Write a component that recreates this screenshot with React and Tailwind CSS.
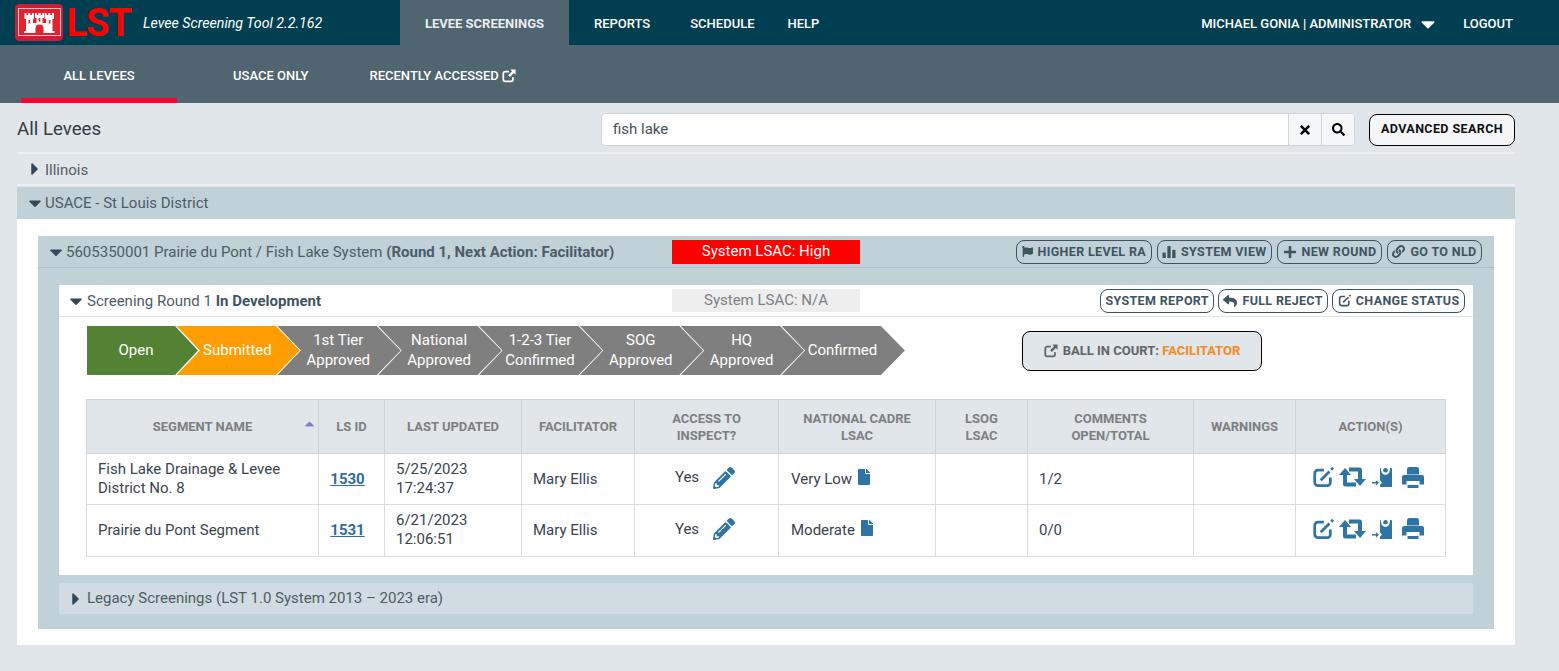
import React from "react";
import { FaCaretDown, FaCaretRight, FaFile, FaFlag, FaLink, FaPencilAlt, FaPlus, FaReply, FaSearch, FaTimes, FaSortUp } from "react-icons/fa";

function Castle() {
  return (
    <svg viewBox="0 0 48 37" className="w-[48px] h-[37px] shrink-0">
      <rect x="0" y="0" width="48" height="37" rx="4.5" fill="#c9203a" />
      <rect x="3.5" y="4.5" width="42" height="27" fill="#e5202f" stroke="#f3c3c8" strokeWidth="1" />
      <path
        fill="#fff"
        d="M9 29v-2h2V15H9.5V9h2v2h1.7V9h2v2h1.7V9h2v6H18v4h3.5v-5H20V9h1.8v2h1.5V9h2.4v2h1.5V9H29v5h-1.5v5H31v-4h-1.4V9h2v2h1.7V9h2v2H37V9h2v6h-1.5v12h2v2Z"
      />
      <path fill="#e5202f" d="M20.5 29v-4.5a4 4 0 0 1 8 0V29ZM13.5 16h1.6v3.5h-1.6ZM33.8 16h1.6v3.5h-1.6ZM23.7 14h1.6v3.5h-1.6Z" />
    </svg>
  );
}

function BarsIcon({ className }) {
  return (
    <svg viewBox="0 0 12 12" className={className} fill="currentColor">
      <rect x="0" y="7" width="3" height="5" />
      <rect x="4.5" y="1" width="3" height="11" />
      <rect x="9" y="4.5" width="3" height="7.5" />
    </svg>
  );
}

function EditIcon({ className }) {
  return (
    <svg viewBox="0 0 24 24" className={className} fill="none" stroke="currentColor">
      <path strokeWidth="3" d="M13 4.5H6.5a3.5 3.5 0 0 0-3.5 3.5v10a3.5 3.5 0 0 0 3.5 3.5h10a3.5 3.5 0 0 0 3.5-3.5v-5.5" />
      <path strokeWidth="3" d="M9.5 15.5 19 6" />
      <path strokeWidth="3" d="M21 4l2-2" />
    </svg>
  );
}

function ExternalIcon({ className }) {
  return (
    <svg viewBox="0 0 16 16" className={className} fill="none" stroke="currentColor">
      <path strokeWidth="2" d="M8 3H3.5A2 2 0 0 0 1.500 5v7a2 2 0 0 0 2 2h7a2 2 0 0 0 2-2V9.500" />
      <path strokeWidth="0" fill="currentColor" d="M9.500 0.500H15.500V6.500L13.500 4.500 9 9 7 7 11.500 2.500Z" />
    </svg>
  );
}

function RetweetIcon() {
  return (
    <svg viewBox="0 0 27 20" className="w-[27px] h-[20px] shrink-0" fill="#2e75a3">
      <path d="M6 1 12 8H8V15.500H17V19.500H6.500A2.500 2.500 0 0 1 4 17V8H0Z" />
      <path d="M21 19 15 12H19V4.500H10V0.500H20.500A2.500 2.500 0 0 1 23 3V12H27Z" />
    </svg>
  );
}

function TransferIcon() {
  return (
    <svg viewBox="0 0 20 20" className="w-[20px] h-[20px] shrink-0 ml-[1px]" fill="#2e75a3">
      <path d="M8 1H8.800C8.800 5 10.500 7.800 13.500 7.800S18 5 18 1H19A1 1 0 0 1 20 2V20H8V17.800L10 15.800 8 13.200Z" />
      <circle cx="13.500" cy="3.200" r="2.300" />
      <path d="M0 15h4v-1.800l3 2.600-3 2.600v-1.800H0Z" />
    </svg>
  );
}

function PrintIcon() {
  return (
    <svg viewBox="0 0 22 21" className="w-[22px] h-[21px] shrink-0" fill="#2e75a3">
      <path d="M7.500 0H14.500A2.500 2.500 0 0 1 17 2.500V7.500H5V2.500A2.500 2.500 0 0 1 7.500 0Z" />
      <path d="M2 8H20A2 2 0 0 1 22 10V17.500H17.500V14H4.500V17.500H0V10A2 2 0 0 1 2 8Z" />
      <path d="M5.500 18H16.500V21H5.500Z" />
    </svg>
  );
}

function Pill({ icon, children, tight }) {
  return (
    <span className={`inline-flex items-center gap-[5px] h-[24px] rounded-[8px] border border-[#3c5361] text-[#3f5462] text-[12.5px] font-bold tracking-[0.35px] whitespace-nowrap ${tight ? "px-[4px]" : "px-[4.5px]"}`}>
      {icon}
      <span className="pt-[1px]">{children}</span>
    </span>
  );
}

const steps = [
  { a: "Open", bg: "bg-[#548235]", first: true },
  { a: "Submitted", bg: "bg-[#ff9e02]" },
  { a: "1st Tier", b: "Approved" },
  { a: "National", b: "Approved" },
  { a: "1-2-3 Tier", b: "Confirmed" },
  { a: "SOG", b: "Approved" },
  { a: "HQ", b: "Approved" },
  { a: "Confirmed" },
];

function Stepper() {
  return (
    <div className="flex w-[818px] shrink-0">
      {steps.map((s, i) => (
        <div
          key={s.a + i}
          className={`h-[49px] shrink-0 flex flex-col items-center justify-center pb-[2px] text-white text-[15px] leading-[20px] ${s.bg || "bg-[#7f7f7f]"} ${
            s.first
              ? "w-[112px] pr-[14px] [clip-path:polygon(0_0,88px_0,111px_50%,88px_100%,0_100%)]"
              : "w-[124.85px] -ml-[24px] [clip-path:polygon(1.5px_0,100.85px_0,100%_50%,100.85px_100%,1.5px_100%,25px_50%)]"
          }`}
        >
          <span>{s.a}</span>
          {s.b && <span>{s.b}</span>}
        </div>
      ))}
    </div>
  );
}

const rows = [
  { name: ["Fish Lake Drainage & Levee", "District No. 8"], id: "1530", d: "5/25/2023", t: "17:24:37", lsac: "Very Low", comments: "1/2", h: "h-[51px]" },
  { name: ["Prairie du Pont Segment"], id: "1531", d: "6/21/2023", t: "12:06:51", lsac: "Moderate", comments: "0/0", h: "h-[52px]" },
];

const th = "border border-[#cfd3d6] font-bold text-[13px] leading-[17px] text-[#7c7f80] text-center align-middle px-1";
const td = "border border-[#dcdcdc] text-[15px] leading-[19px] text-[#3a4450] align-middle px-[11px]";

function DataTable() {
  return (
    <table className="table-fixed border-collapse w-[1359px] ml-[27px] mt-[24px]">
      <colgroup>
        <col className="w-[232px]" />
        <col className="w-[66px]" />
        <col className="w-[137px]" />
        <col className="w-[113px]" />
        <col className="w-[144px]" />
        <col className="w-[157px]" />
        <col className="w-[92px]" />
        <col className="w-[166px]" />
        <col className="w-[102px]" />
        <col className="w-[150px]" />
      </colgroup>
      <thead>
        <tr className="h-[54px] bg-[#e1e6ea]">
          <th className={`${th} relative`}>
            SEGMENT NAME
            <FaSortUp className="absolute right-[1px] top-[20px] text-[#7b7fd6] text-[15px]" />
          </th>
          <th className={th}>LS ID</th>
          <th className={th}>LAST UPDATED</th>
          <th className={th}>FACILITATOR</th>
          <th className={th}>ACCESS TO<br />INSPECT?</th>
          <th className={th}>NATIONAL CADRE<br />LSAC</th>
          <th className={th}>LSOG<br />LSAC</th>
          <th className={th}>COMMENTS<br />OPEN/TOTAL</th>
          <th className={th}>WARNINGS</th>
          <th className={th}>ACTION(S)</th>
        </tr>
      </thead>
      <tbody>
        {rows.map((r) => (
          <tr key={r.id} className={r.h}>
            <td className={td}>{r.name.map((n) => <div key={n}>{n}</div>)}</td>
            <td className={`${td} text-center !pl-0 !pr-[8px]`}>
              <span className="font-bold underline text-[#2e6c9a]">{r.id}</span>
            </td>
            <td className={td}><div className="-mt-[1px]">{r.d}</div><div>{r.t}</div></td>
            <td className={td}>Mary Ellis</td>
            <td className={td}>
              <div className="flex items-center justify-center gap-[14px] pr-[3px] -mt-[3px]">
                <span>Yes</span>
                <FaPencilAlt className="text-[#2e75a3] text-[22px]" />
              </div>
            </td>
            <td className={`${td} !pl-[12px]`}>
              <div className="flex items-center gap-[4px]">
                <span>{r.lsac}</span>
                <FaFile className="text-[#2e75a3] text-[16px] -mt-[5px]" />
              </div>
            </td>
            <td className={td}></td>
            <td className={td}>{r.comments}</td>
            <td className={td}></td>
            <td className={td}>
              <div className="flex items-center gap-[5px] pl-[5px] -mt-[4px]">
                <EditIcon className="text-[#2e75a3] w-[22px] h-[22px] shrink-0" />
                <RetweetIcon />
                <TransferIcon />
                <span className="ml-[5px]"><PrintIcon /></span>
              </div>
            </td>
          </tr>
        ))}
      </tbody>
    </table>
  );
}

export default function App() {
  return (
    <div className="w-[1559px] h-[671px] overflow-hidden bg-[#e1e6ea] font-['Roboto',sans-serif]">
      <header className="h-[45px] bg-[#003e52] flex items-center text-white text-[13px] font-medium">
        <div className="w-[400px] flex items-center pl-[15px]">
          <Castle />
          <span className="ml-[3.5px] text-[#ff0000] text-[38px] leading-none font-bold tracking-[-1px]">LST</span>
          <span className="ml-[12px] italic text-[14.2px] font-normal text-white pt-[2px]">Levee Screening Tool 2.2.162</span>
        </div>
        <div className="h-full w-[169px] bg-[#4f6570] flex items-center justify-center font-bold text-[#e8edf0] pt-[3px]">LEVEE SCREENINGS</div>
        <span className="ml-[25px] pt-[3px]">REPORTS</span>
        <span className="ml-[40px] pt-[3px]">SCHEDULE</span>
        <span className="ml-[33px] pt-[3px]">HELP</span>
        <span className="ml-auto pt-[3px]">MICHAEL GONIA | ADMINISTRATOR</span>
        <FaCaretDown className="ml-[6px] text-[22px] mt-[3px]" />
        <span className="ml-[24px] mr-[46px] pt-[3px]">LOGOUT</span>
      </header>

      <nav className="h-[58px] bg-[#4f6570] flex text-white text-[13px] font-medium pl-[21px]">
        <div className="w-[156px] h-full border-b-[5px] border-[#ff0033] flex items-center justify-center pt-[9px]">ALL LEVEES</div>
        <div className="ml-[56px] flex items-center pt-[4px]">USACE ONLY</div>
        <div className="ml-[61px] flex items-center gap-[3px] pt-[4px]">RECENTLY ACCESSED <ExternalIcon className="w-[14px] h-[14px]" /></div>
      </nav>

      <main className="mx-[17px] w-[1498px]">
        <div className="h-[51px] pt-[4px] flex items-center border-b-[2px] border-[#eef1f3]">
          <h1 className="text-[18.7px] text-[#333b44] font-normal">All Levees</h1>
          <div className="ml-auto flex h-[33px] w-[754px] rounded-[4px] border border-[#ced4da] bg-white overflow-hidden">
            <div className="flex-1 px-[11px] flex items-center text-[15px] text-[#495057]">fish lake</div>
            <div className="w-[33px] border-l border-[#ced4da] bg-[#f4f6f8] flex items-center justify-center text-[14px] text-black"><FaTimes /></div>
            <div className="w-[33px] border-l border-[#ced4da] bg-[#f4f6f8] flex items-center justify-center text-[13px] text-black"><FaSearch /></div>
          </div>
          <div className="ml-[14px] w-[146px] h-[32px] rounded-[8px] border border-black bg-[#f4f6f8] flex items-center justify-center text-[12.5px] font-bold tracking-[0.4px] text-[#111]">ADVANCED SEARCH</div>
        </div>

        <div className="h-[32px] flex items-center text-[15px] text-[#545d66] pl-[8px] pt-[2px] border-b-[2px] border-[#eef1f3]">
          <FaCaretRight className="text-[#33495a] text-[20px] -mt-[2px]" />
          Illinois
        </div>

        <div className="h-[32px] mt-[1px] bg-[#c0d1d8] flex items-center text-[15px] text-[#4d5c68] pl-[8px]">
          <FaCaretDown className="text-[#33495a] text-[20px]" />
          USACE - St Louis District
        </div>

        <div className="h-[426px] bg-white px-[21px] pt-[17px]">
          <div className="h-[393px] bg-[#c0d1d8]">
            <div className="h-[32px] flex items-center border-b border-[#a9bcc4] pl-[8px] pr-[12px] text-[15px] text-[#4d5c68]">
              <div className="w-[626px] flex items-center whitespace-nowrap pt-[1px]">
                <FaCaretDown className="text-[#33495a] text-[20px]" />
                <span>5605350001 Prairie du Pont / Fish Lake System&nbsp;</span>
                <b className="font-bold">(Round 1, Next Action: Facilitator)</b>
              </div>
              <div className="w-[188px] h-[24px] bg-[#ff0000] text-white flex items-center justify-center">System LSAC: High</div>
              <div className="ml-auto flex gap-[5px]">
                <Pill icon={<FaFlag className="text-[11px]" />}>HIGHER LEVEL RA</Pill>
                <Pill icon={<BarsIcon className="w-[14px] h-[13px]" />}>SYSTEM VIEW</Pill>
                <Pill icon={<FaPlus className="text-[14px]" />}>NEW ROUND</Pill>
                <Pill icon={<FaLink className="text-[13px]" />}>GO TO NLD</Pill>
              </div>
            </div>

            <div className="mx-[21px] mt-[17px] h-[290px] bg-white">
              <div className="h-[32px] flex items-center border-b border-[#dfe3e6] pl-[7px] pr-[8px] text-[15px] text-[#4d5c68]">
                <div className="w-[606px] flex items-center whitespace-nowrap pt-[1px]">
                  <FaCaretDown className="text-[#33495a] text-[20px] mr-[1px]" />
                  <span>Screening Round 1&nbsp;</span>
                  <b className="font-bold text-[#3f5462]">In Development</b>
                </div>
                <div className="w-[188px] h-[23px] bg-[#eeeeee] text-[#7c8186] flex items-center justify-center">System LSAC: N/A</div>
                <div className="ml-auto flex gap-[4px]">
                  <Pill tight>SYSTEM REPORT</Pill>
                  <Pill icon={<FaReply className="text-[14px]" />}>FULL REJECT</Pill>
                  <Pill icon={<EditIcon className="w-[13px] h-[13px]" />}>CHANGE STATUS</Pill>
                </div>
              </div>

              <div className="flex pl-[28px] pt-[9px]">
                <Stepper />
                <div className="ml-[117px] mt-[5px] w-[240px] h-[40px] rounded-[8px] border border-black bg-[#e1e6ea] flex items-center justify-center gap-[5px] text-[13px] font-bold text-[#5f6468]">
                  <ExternalIcon className="w-[14px] h-[14px]" />
                  <span>BALL IN COURT: <span className="text-[#f58a1f]">FACILITATOR</span></span>
                </div>
              </div>

              <DataTable />
            </div>

            <div className="mx-[21px] mt-[8px] h-[31px] bg-[#d0dce2] flex items-center text-[15px] text-[#4d5c68] pl-[7px]">
              <FaCaretRight className="text-[#33495a] text-[20px] mr-[1px]" />
              Legacy Screenings (LST 1.0 System 2013 – 2023 era)
            </div>
          </div>
        </div>
      </main>
    </div>
  );
}
